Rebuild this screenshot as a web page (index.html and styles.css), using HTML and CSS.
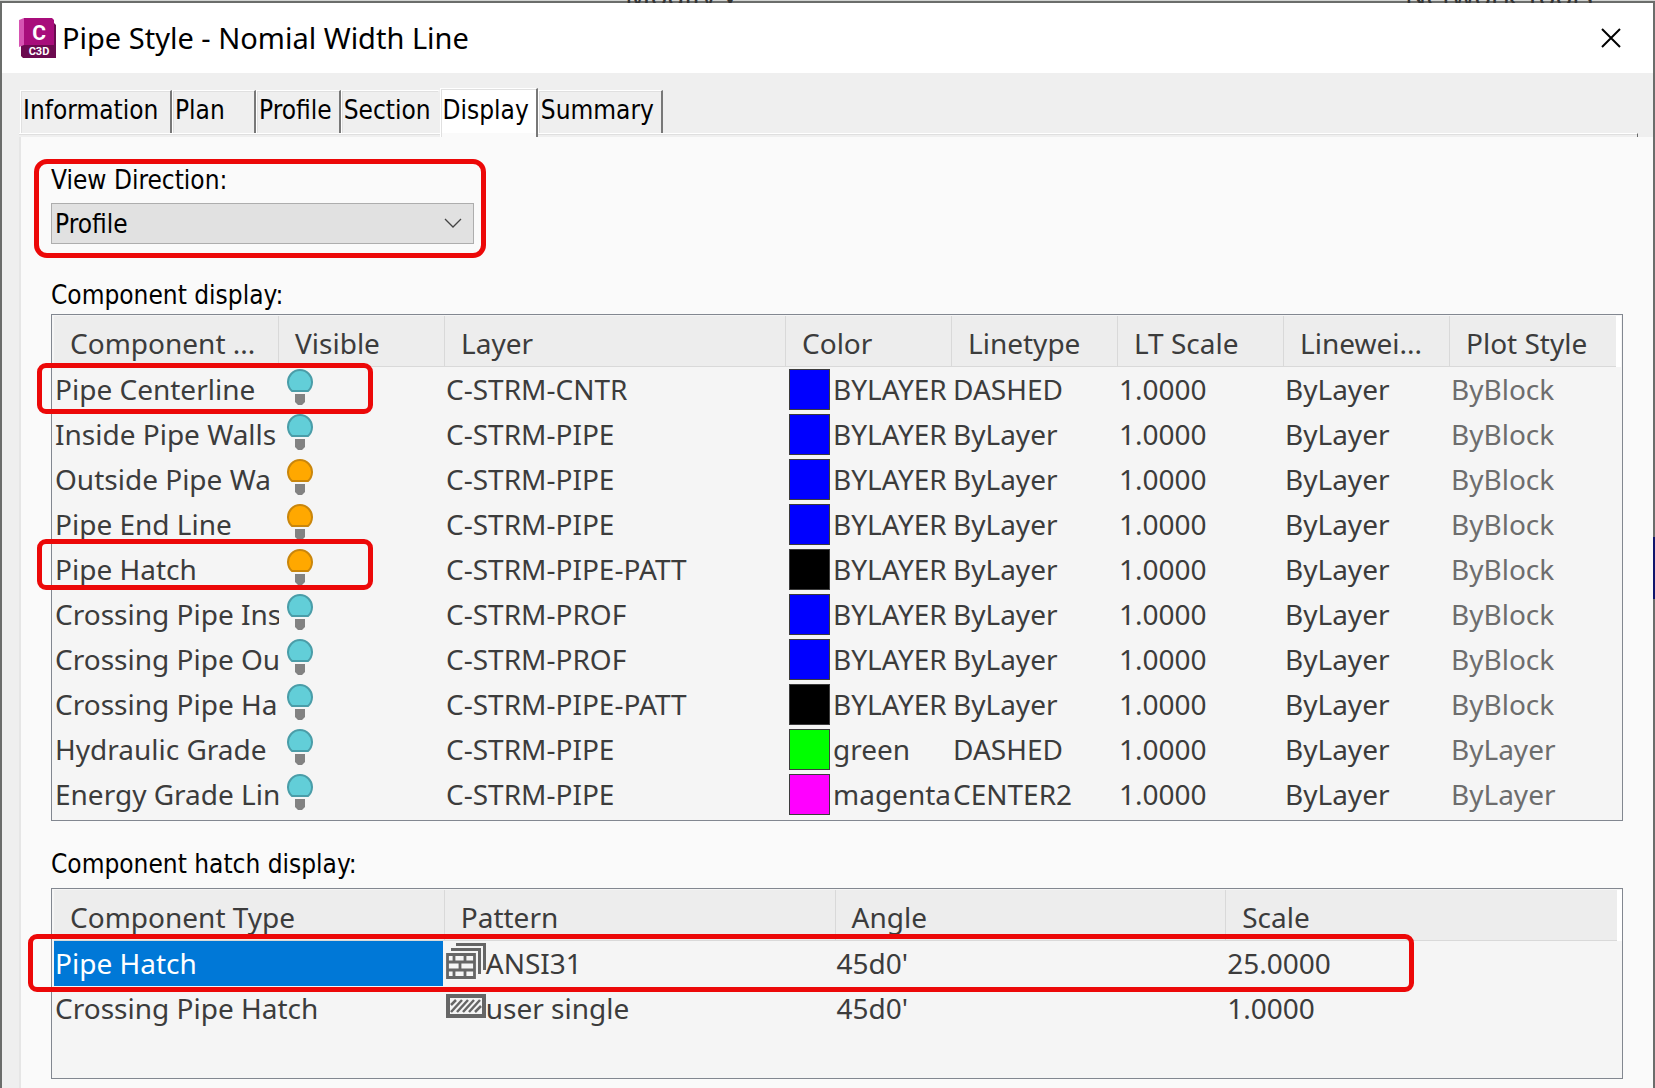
FILE: index.html
```html
<!DOCTYPE html>
<html lang="en">
<head>
  <meta charset="utf-8">
  <title>Pipe Style - Nomial Width Line</title>
  <link rel="stylesheet" href="styles.css">
</head>
<body>
  <svg class="defs" width="0" height="0" aria-hidden="true">
    <symbol id="bulb" viewBox="0 0 26 36">
      <path d="M5 22 A12 12 0 1 1 21 22 Z" stroke-width="2"/>
      <path d="M8 25 H18 V33 L15 36 H11 L8 33 Z" fill="#828282" stroke="none"/>
    </symbol>
  </svg>

  <div class="backdrop">
    <span>Modify ▾</span>
    <span>Network Tools</span>
  </div>

  <main class="dialog">
    <header class="titlebar">
      <svg class="logo" viewBox="0 0 37 40" width="37" height="40" aria-hidden="true">
        <path d="M2 5 H35 L37 7 V40 H4 L2 38 Z" fill="#6b0a4f"/>
        <path d="M0 2 L5 0 V27 L0 29 Z" fill="#d653b2"/>
        <path d="M5 0 H33 L35 2 V27 H5 Z" fill="#a80d7b"/>
        <text class="logo-c" x="20" y="22" text-anchor="middle">C</text>
        <text class="logo-name" x="20" y="37" text-anchor="middle">C3D</text>
      </svg>
      <h1>Pipe Style - Nomial Width Line</h1>
      <button class="close" type="button" aria-label="Close">
        <svg viewBox="0 0 20 20" width="20" height="20"><path d="M1 1 L19 19 M19 1 L1 19" stroke="#000" stroke-width="2"/></svg>
      </button>
    </header>

    <nav class="tabs" role="tablist">
      <button class="tab" type="button" role="tab">Information</button>
      <button class="tab" type="button" role="tab">Plan</button>
      <button class="tab" type="button" role="tab">Profile</button>
      <button class="tab before-active" type="button" role="tab">Section</button>
      <button class="tab active" type="button" role="tab" aria-selected="true">Display</button>
      <button class="tab" type="button" role="tab">Summary</button>
    </nav>
    <div class="panel-edge"></div>

    <section class="panel">
      <div class="field">
        <label for="view">View Direction:</label>
        <div class="combo">
          <select id="view">
            <option>Plan</option>
            <option selected>Profile</option>
            <option>Section</option>
          </select>
          <svg class="chevron" viewBox="0 0 18 10" width="18" height="10"><path d="M1 1 L9 9 L17 1" fill="none" stroke="#444" stroke-width="1.3"/></svg>
        </div>
        <span class="mark mark-view"></span>
      </div>

      <h2 id="components">Component display:</h2>
      <div class="list">
        <table class="components" aria-labelledby="components">
          <colgroup>
            <col class="c-type">
            <col class="c-std">
            <col class="c-layer">
            <col class="c-std">
            <col class="c-std">
            <col class="c-std">
            <col class="c-std">
            <col class="c-std">
          </colgroup>
          <thead>
            <tr><th>Component ...</th><th>Visible</th><th>Layer</th><th>Color</th><th>Linetype</th><th>LT Scale</th><th>Linewei...</th><th>Plot Style</th></tr>
          </thead>
          <tbody>
            <tr><td>Pipe Centerline</td><td><svg class="bulb off"><use href="#bulb"/></svg></td><td>C-STRM-CNTR</td><td><i class="swatch blue"></i>BYLAYER</td><td>DASHED</td><td>1.0000</td><td>ByLayer</td><td>ByBlock</td></tr>
            <tr><td>Inside Pipe Walls</td><td><svg class="bulb off"><use href="#bulb"/></svg></td><td>C-STRM-PIPE</td><td><i class="swatch blue"></i>BYLAYER</td><td>ByLayer</td><td>1.0000</td><td>ByLayer</td><td>ByBlock</td></tr>
            <tr><td>Outside Pipe Wa</td><td><svg class="bulb on"><use href="#bulb"/></svg></td><td>C-STRM-PIPE</td><td><i class="swatch blue"></i>BYLAYER</td><td>ByLayer</td><td>1.0000</td><td>ByLayer</td><td>ByBlock</td></tr>
            <tr><td>Pipe End Line</td><td><svg class="bulb on"><use href="#bulb"/></svg></td><td>C-STRM-PIPE</td><td><i class="swatch blue"></i>BYLAYER</td><td>ByLayer</td><td>1.0000</td><td>ByLayer</td><td>ByBlock</td></tr>
            <tr><td>Pipe Hatch</td><td><svg class="bulb on"><use href="#bulb"/></svg></td><td>C-STRM-PIPE-PATT</td><td><i class="swatch black"></i>BYLAYER</td><td>ByLayer</td><td>1.0000</td><td>ByLayer</td><td>ByBlock</td></tr>
            <tr><td>Crossing Pipe Ins</td><td><svg class="bulb off"><use href="#bulb"/></svg></td><td>C-STRM-PROF</td><td><i class="swatch blue"></i>BYLAYER</td><td>ByLayer</td><td>1.0000</td><td>ByLayer</td><td>ByBlock</td></tr>
            <tr><td>Crossing Pipe Ou</td><td><svg class="bulb off"><use href="#bulb"/></svg></td><td>C-STRM-PROF</td><td><i class="swatch blue"></i>BYLAYER</td><td>ByLayer</td><td>1.0000</td><td>ByLayer</td><td>ByBlock</td></tr>
            <tr><td>Crossing Pipe Ha</td><td><svg class="bulb off"><use href="#bulb"/></svg></td><td>C-STRM-PIPE-PATT</td><td><i class="swatch black"></i>BYLAYER</td><td>ByLayer</td><td>1.0000</td><td>ByLayer</td><td>ByBlock</td></tr>
            <tr><td>Hydraulic Grade</td><td><svg class="bulb off"><use href="#bulb"/></svg></td><td>C-STRM-PIPE</td><td><i class="swatch green"></i>green</td><td>DASHED</td><td>1.0000</td><td>ByLayer</td><td>ByLayer</td></tr>
            <tr><td>Energy Grade Lin</td><td><svg class="bulb off"><use href="#bulb"/></svg></td><td>C-STRM-PIPE</td><td><i class="swatch magenta"></i>magenta</td><td>CENTER2</td><td>1.0000</td><td>ByLayer</td><td>ByLayer</td></tr>
          </tbody>
        </table>
        <span class="mark mark-centerline"></span>
        <span class="mark mark-hatch"></span>
      </div>

      <h2 id="hatches" class="second">Component hatch display:</h2>
      <div class="list hatch-list">
        <table class="hatches" aria-labelledby="hatches">
          <thead>
            <tr><th>Component Type</th><th>Pattern</th><th>Angle</th><th>Scale</th></tr>
          </thead>
          <tbody>
            <tr>
              <td class="selected">Pipe Hatch</td>
              <td><svg class="pattern" viewBox="0 0 40 36" width="40" height="36">
                <path d="M10 1.5 H38.500 V27 M5 6.500 H33.500 V31" fill="none" stroke="#666" stroke-width="3"/>
                <path d="M1.500 11.500 H28.500 V34.500 H1.500 Z M1 19 H29 M1 27 H29 M8 11 V19 M19 11 V19 M14 19 V27 M8 27 V35 M19 27 V35" fill="none" stroke="#666" stroke-width="2.800"/>
              </svg>ANSI31</td>
              <td>45d0'</td><td>25.0000</td>
            </tr>
            <tr>
              <td>Crossing Pipe Hatch</td>
              <td><svg class="pattern" viewBox="0 0 40 36" width="40" height="36">
                <path d="M2 8 H38 V28 H2 Z" fill="#f4f4f4" stroke="#666" stroke-width="4"/>
                <path d="M5 17 L10 12 M5 24 L16 12 M11 24 L22 12 M17 24 L28 12 M23 24 L34 12 M29 24 L35 18" stroke="#666" stroke-width="2.500"/>
              </svg>user single</td>
              <td>45d0'</td><td>1.0000</td>
            </tr>
          </tbody>
        </table>
        <span class="mark mark-row"></span>
      </div>
    </section>
  </main>
</body>
</html>
```
FILE: styles.css
```css
*{
  box-sizing: border-box;
}

body{
  margin: 0;
  min-height: 100vh;
  display: flex;
  flex-direction: column;
  background: linear-gradient(#10166b, #10166b) right 537px / 2px 62px no-repeat, #6b6d6b;
  font-family: "Noto Sans", "Open Sans", sans-serif;
  font-size: 28px;
  color: #3c3c3c;
}

.defs{
  position: absolute;
}

/* sliver of the ribbon behind the dialog */
.backdrop{
  display: flex;
  justify-content: space-between;
  align-items: flex-end;
  height: 3px;
  padding: 0 62px 0 625px;
  overflow: hidden;
  background: linear-gradient(#d2d4d2 1px, #6b6d6b 1px);
  color: #333;
  font-size: 28px;
  line-height: 30px;
}

.backdrop span{
  margin-bottom: -7px;
}

.dialog{
  flex: 1;
  display: flex;
  flex-direction: column;
  margin: 0 2px;
  background: #efefef;
}

.titlebar{
  display: flex;
  align-items: center;
  height: 70px;
  padding: 0 32px 0 17px;
  background: #fff;
}

h1{
  flex: 1;
  margin: 0 0 0 6px;
  color: #000;
  font-size: 29px;
  font-weight: normal;
  line-height: 40px;
}

.logo-c{
  fill: #fff;
  font: bold 21px Roboto, sans-serif;
}

.logo-name{
  fill: #fff;
  font: bold 11px Roboto, sans-serif;
}

.close{
  display: flex;
  padding: 0;
  border: 0;
  background: none;
}

.tabs{
  display: flex;
  align-items: flex-end;
  height: 60px;
  padding-left: 18px;
}

.tab,
label,
select,
h2{
  color: #000;
  font-family: "DejaVu Sans Condensed", "DejaVu Sans", sans-serif;
  font-size: 26px;
  font-weight: normal;
  line-height: 30px;
}

.tab{
  height: 43px;
  min-width: 84px;
  padding: 0 7px 4px 2px;
  border: 0;
  border-top: 1px solid #fff;
  border-left: 1px solid #fff;
  border-right: 2px solid #787878;
  background: #efefef;
  box-shadow: inset 1px 1px #e0e0e0;
  text-align: left;
}

.tab:first-child{
  min-width: 152px;
}

.tab.before-active{
  border-right-color: #efefef;
}

.tab.active{
  position: relative;
  height: 49px;
  margin-bottom: -4px;
  padding-bottom: 6px;
  background: linear-gradient(#fff 44px, #fafafa 44px);
}

.panel-edge{
  height: 4px;
  margin: 0 15px 0 17px;
  border-top: 1px solid #fff;
  border-right: 1px solid #696969;
  background: #efefef;
  box-shadow: inset 0 1px #dfdfdf;
}

.panel{
  flex: 1;
  margin-left: 17px;
  padding: 28px 30px 9px;
  border-left: 2px solid #e6e6e6;
  background: #fafafa;
}

.field{
  position: relative;
  display: flex;
  flex-direction: column;
  gap: 8px;
  max-width: 423px;
}

.combo{
  position: relative;
}

select{
  display: block;
  width: 100%;
  height: 41px;
  padding: 0 40px 0 3px;
  appearance: none;
  border: 1px solid #adadad;
  border-radius: 0;
  background: #e1e1e1;
}

.chevron{
  position: absolute;
  top: 15px;
  right: 12px;
}

h2{
  margin: 36px 0 4px;
}

h2.second{
  margin: 28px 0 9px;
}

.list{
  position: relative;
  padding: 1px 7px 3px 2px;
  border: 1px solid #828790;
  background: #f5f5f5;
}

.hatch-list{
  min-height: 191px;
  padding-right: 5px;
}

table{
  width: 100%;
  table-layout: fixed;
  border-collapse: separate;
  border-spacing: 0;
}

.c-type{
  width: 225px;
}

.c-std{
  width: 166px;
}

.c-layer{
  width: 341px;
}

th,
td{
  height: 45px;
  padding: 0 0 0 1px;
  overflow: hidden;
  font-weight: normal;
  line-height: 45px;
  text-align: left;
  vertical-align: top;
  white-space: nowrap;
}

th{
  height: 51px;
  padding: 5px 0 0 16px;
  border-right: 1px solid #d9d9d9;
  border-bottom: 1px solid #d9d9d9;
  background: #ededed;
}

th:last-child{
  border-right: 0;
  overflow: visible;
  box-shadow: 5px 0 #fff;
}

.components td:last-child{
  color: #6d6d6d;
}

td.selected{
  border-right: 2px solid #f5f5f5;
  background: #0078d7;
  color: #fff;
}

.bulb{
  display: block;
  width: 26px;
  height: 36px;
  margin: 2px 0 0 7px;
}

.bulb.off{
  fill: #62ced8;
  stroke: #4a9da8;
}

.bulb.on{
  fill: #ffa800;
  stroke: #c9860c;
}

.swatch{
  float: left;
  width: 41px;
  height: 41px;
  margin: 2px 3px 0 2px;
  border: 1px solid #3c3c3c;
}

.blue{
  background: #00f;
}

.black{
  background: #000;
}

.green{
  background: #0f0;
}

.magenta{
  background: #f0f;
}

.pattern{
  float: left;
  margin-top: 2px;
}

/* red call-outs drawn over the form */
.mark{
  position: absolute;
  border: 5px solid #ec0808;
  border-radius: 9px;
  pointer-events: none;
}

.mark-view{
  top: -6px;
  right: -12px;
  bottom: -14px;
  left: -17px;
  border-radius: 13px;
}

.mark-centerline,
.mark-hatch{
  top: 48px;
  left: -15px;
  width: 336px;
  height: 51px;
}

.mark-hatch{
  top: 224px;
}

.mark-row{
  top: 45px;
  right: 208px;
  left: -24px;
  height: 58px;
}
```
